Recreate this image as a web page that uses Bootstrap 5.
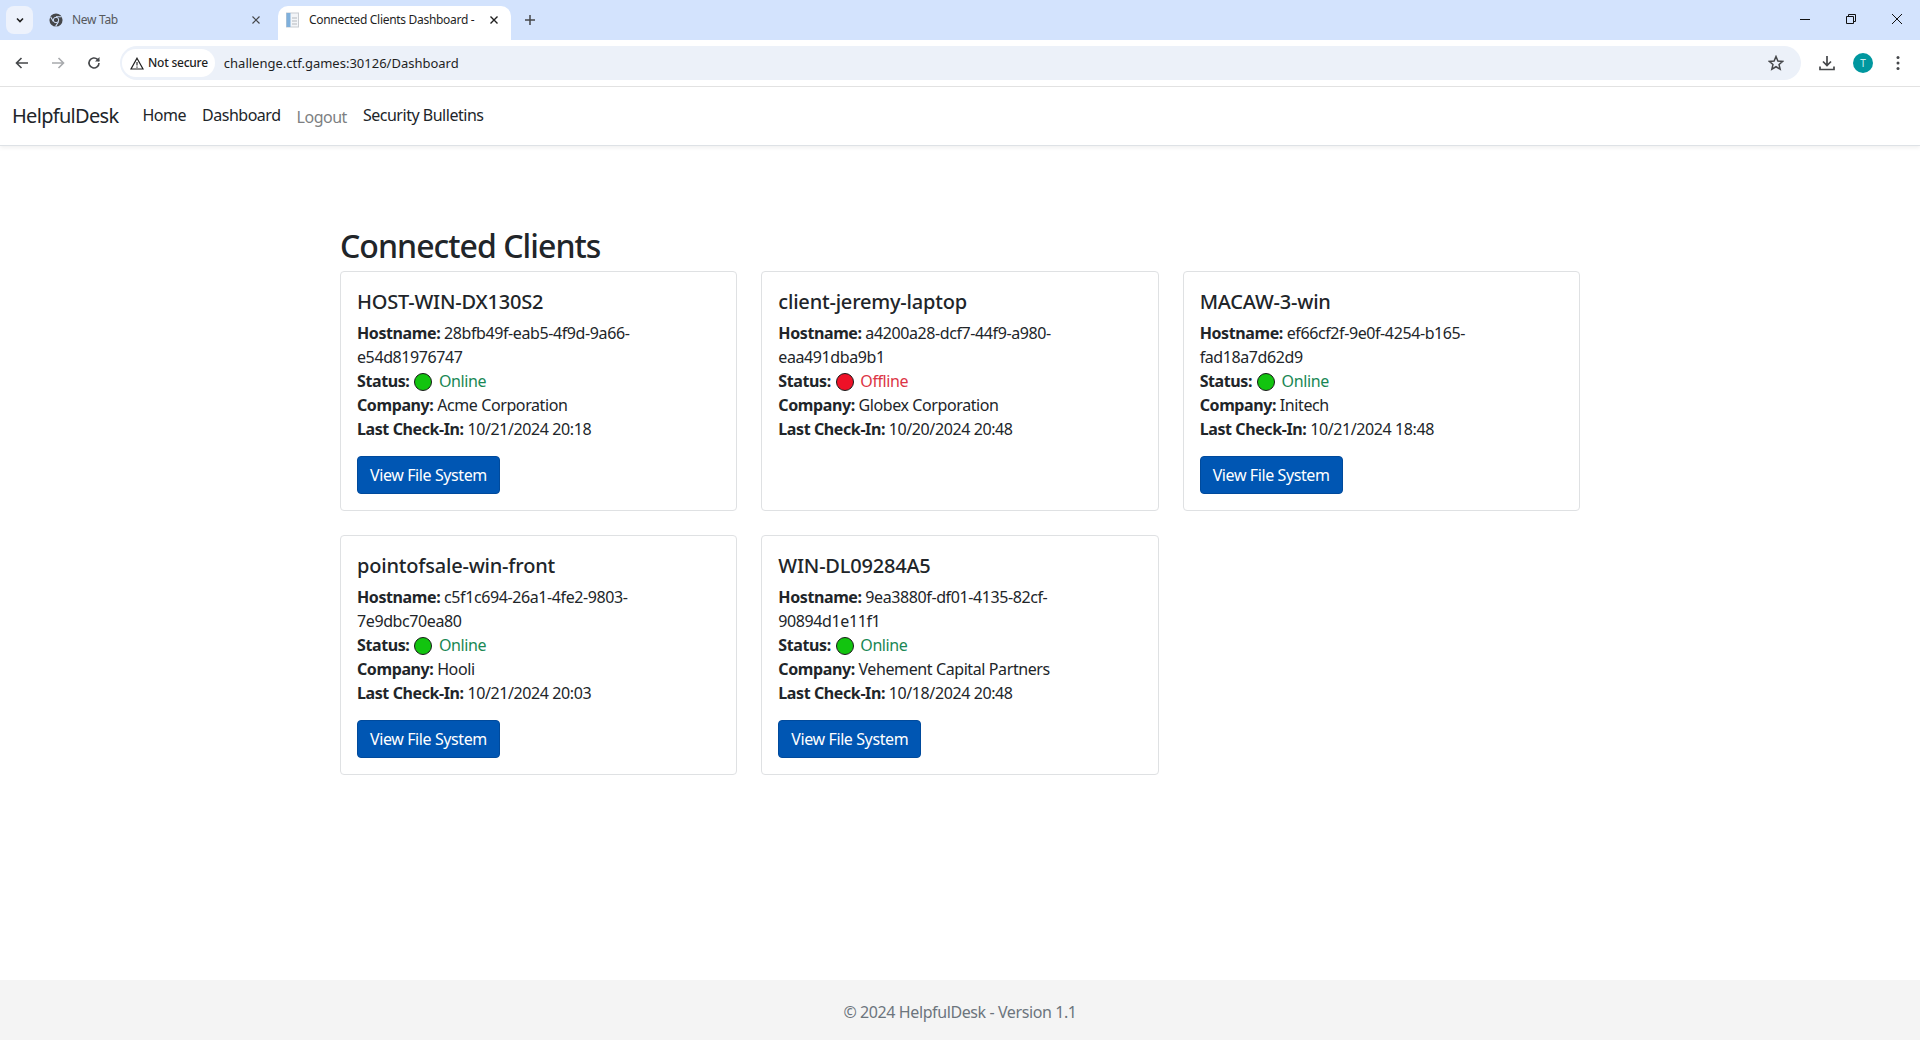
<!DOCTYPE html>
<html lang="en">
<head>
<meta charset="utf-8">
<title>Connected Clients Dashboard</title>
<link href="https://cdn.jsdelivr.net/npm/bootstrap@5.3.0/dist/css/bootstrap.min.css" rel="stylesheet">
<style>
html,body{height:100%;overflow:hidden}
body{font-family:"Noto Sans","Open Sans",sans-serif;color:#212529;letter-spacing:-.025em}
.strip{height:40px;background:#d3e3fd;font-size:12px;letter-spacing:-.025em;color:#45474a}
.tabmenu{width:27px;height:28px;margin:6px 0 0 6px;background:#edf2fc;border-radius:8px}
.tabx{height:34px;margin-top:6px;padding-bottom:6px}
.tab-idle{width:245px;padding-left:16px;padding-right:17px}
.tab-idle .tname{margin-left:9px;color:#55585c}
.tab-active{width:233px;background:#fff;border-radius:10px 10px 0 0;padding-left:8px;padding-right:12px;color:#1f1f1f}
.tab-active .tname{margin-left:9px;white-space:nowrap;overflow:hidden;flex:1}
.newtab{height:28px;margin-left:13px;margin-top:6px}
.winbtns{height:40px;gap:34px;padding-right:17px;padding-bottom:2px}
.toolbar{height:46px;background:#fff;border-radius:10px 10px 0 0;padding:6px 0 6px 14px}
.toolrule{height:1px;background:#e3e3e3}
.omni{height:34px;background:#ecf1f9;border-radius:17px;flex:1;margin:0 18px 0 18px;padding:0 17px 0 2px;font-size:13px;letter-spacing:0;color:#1f1f1f}
.omni-url{padding-top:1px}
.secure{height:28px;background:#fff;border-radius:14px;padding:0 7px 0 8px;margin-right:9px;font-size:12px;font-weight:500;letter-spacing:-.02em}
.toolright{gap:18px;padding-right:15px}
.avatar{width:20px;height:20px;border-radius:50%;background:#00979f;color:#cdeef0;font-size:10px;letter-spacing:0}
.tnav{gap:20px}
.hd-nav{background:#fff;border-bottom:1px solid #dee2e6;box-shadow:0 2px 4px rgba(0,0,0,.06);padding:8px 0 8px 12px}
.hd-nav .navbar-brand{font-size:20px;margin-right:16px;color:#212529;padding:5px 0;line-height:30px;letter-spacing:-.035em}
.hd-nav .nav-link{color:#212529;padding:8px;letter-spacing:-.03em}
.hd-nav .nav-link.muted-link{color:#7d7f82;margin-top:2px}
.clients{width:1264px;max-width:none;padding:81px 12px 0}
.clients h2{font-size:32px;font-weight:500;margin-bottom:6px;line-height:38.4px;letter-spacing:-.03em}
.client-card{border-color:#dfe1e3;border-radius:4px}
.client-card .card-title{font-size:20px;font-weight:500;line-height:24px;letter-spacing:-.01em;padding-top:2px;margin-bottom:6px}
.client-card p{margin-bottom:15px;padding-top:1px}
.dot{display:inline-block;width:18px;height:18px;border-radius:50%;border:1px solid #1a1a1a;vertical-align:-4px;margin:0 3px 0 1px}
.dot-on{background:#12c40f}
.dot-off{background:#ee1127}
.btn-view{background:#0056b3;border-color:#004a9c;color:#fff;border-radius:4px}
.btn-view:hover{background:#004a9c;color:#fff}
.site-foot{height:60px;background:#f4f4f4;color:#6c757d;padding-top:20px}
</style>
</head>
<body class="d-flex flex-column">

<div class="strip d-flex align-items-start flex-shrink-0">
  <div class="tabmenu d-flex align-items-center justify-content-center">
    <svg width="10" height="10" viewBox="0 0 10 10"><path d="M2 3.500 5 6.500 8 3.500" fill="none" stroke="#1f1f1f" stroke-width="1.600"/></svg>
  </div>
  <div class="tabx tab-idle d-flex align-items-center">
    <svg width="14" height="14" viewBox="0 0 16 16"><circle cx="8" cy="8" r="7.500" fill="#45474a"/><path d="M8 4.200h6.600M5 9.800 1.800 4.400M10.900 9.800 7.600 15.300" stroke="#d3e3fd" stroke-width="1.200" fill="none"/><circle cx="8" cy="8" r="3.100" fill="#45474a" stroke="#d3e3fd" stroke-width="1.100"/></svg>
    <span class="tname flex-grow-1">New Tab</span>
    <svg width="10" height="10" viewBox="0 0 10 10"><path d="M1.500 1.500 8.500 8.500M8.500 1.500 1.500 8.500" stroke="#45474a" stroke-width="1.200"/></svg>
  </div>
  <div class="tabx tab-active d-flex align-items-center">
    <svg width="14" height="16" viewBox="0 0 14 16"><rect x=".5" y="1" width="12" height="14" fill="#f3f5f8" stroke="#c8ccd1"/><rect x=".5" y="1" width="4" height="14" fill="#7fb0dc"/><path d="M6 6h5M6 9h5M6 12h5" stroke="#b5b9be"/></svg>
    <span class="tname">Connected Clients Dashboard -</span>
    <svg class="ms-2" width="10" height="10" viewBox="0 0 10 10"><path d="M1.500 1.500 8.500 8.500M8.500 1.500 1.500 8.500" stroke="#1f1f1f" stroke-width="1.400"/></svg>
  </div>
  <div class="newtab d-flex align-items-center">
    <svg width="12" height="12" viewBox="0 0 12 12"><path d="M6 1v10M1 6h10" stroke="#45474a" stroke-width="1.500"/></svg>
  </div>
  <div class="ms-auto d-flex align-items-center winbtns">
    <svg width="12" height="12" viewBox="0 0 12 12"><path d="M1 6.500h10" stroke="#111" stroke-width="1"/></svg>
    <svg width="12" height="12" viewBox="0 0 12 12"><path d="M1.500 3.500h7v7h-7zM3.500 3.500v-2h7v7h-2" fill="none" stroke="#111" stroke-width="1"/></svg>
    <svg width="12" height="12" viewBox="0 0 12 12"><path d="M1 1 11 11M11 1 1 11" stroke="#111" stroke-width="1"/></svg>
  </div>
</div>
<div class="toolbar d-flex align-items-center flex-shrink-0">
  <div class="d-flex align-items-center tnav">
    <svg width="16" height="16" viewBox="0 0 16 16"><path d="M14 8H3M7.500 3 2.500 8l5 5" fill="none" stroke="#45474a" stroke-width="1.600"/></svg>
    <svg width="16" height="16" viewBox="0 0 16 16"><path d="M2 8h11M8.500 3l5 5-5 5" fill="none" stroke="#a8aaad" stroke-width="1.600"/></svg>
    <svg width="16" height="16" viewBox="0 0 16 16"><path d="M13 8a5 5 0 1 1-1.500-3.600L13 6" fill="none" stroke="#45474a" stroke-width="1.600"/><path d="M13.500 2v4.500H9z" fill="#45474a"/></svg>
  </div>
  <div class="omni d-flex align-items-center">
    <div class="secure d-flex align-items-center gap-1">
      <svg width="14" height="13" viewBox="0 0 14 13"><path d="M7 1.200 13 12H1z" fill="none" stroke="#1f1f1f" stroke-width="1.200"/><path d="M7 5v3.500M7 9.500v1.200" stroke="#1f1f1f" stroke-width="1.100"/></svg>
      <span>Not secure</span>
    </div>
    <span class="omni-url">challenge.ctf.games:30126/Dashboard</span>
    <svg class="ms-auto" width="16" height="16" viewBox="0 0 16 16"><path d="M8 1.500 9.900 6l4.800.4-3.650 3.150 1.100 4.700L8 11.750l-4.150 2.500 1.100-4.700L1.300 6.400 6.100 6z" fill="none" stroke="#45474a" stroke-width="1.500"/></svg>
  </div>
  <div class="d-flex align-items-center toolright">
    <svg width="16" height="16" viewBox="0 0 16 16"><path d="M8 1v9M4 6.500 8 10.500l4-4M1 11.500V14.500h14v-3" fill="none" stroke="#45474a" stroke-width="1.700"/></svg>
    <div class="avatar d-flex align-items-center justify-content-center">T</div>
    <svg width="14" height="16" viewBox="0 0 14 16"><circle cx="7" cy="2.500" r="1.500" fill="#45474a"/><circle cx="7" cy="8" r="1.500" fill="#45474a"/><circle cx="7" cy="13.500" r="1.500" fill="#45474a"/></svg>
  </div>
</div>
<div class="toolrule flex-shrink-0"></div>

<nav class="navbar navbar-expand hd-nav flex-shrink-0">
  <div class="d-flex align-items-center">
    <a class="navbar-brand" href="#">HelpfulDesk</a>
    <ul class="navbar-nav">
      <li class="nav-item"><a class="nav-link" href="#">Home</a></li>
      <li class="nav-item"><a class="nav-link" href="#">Dashboard</a></li>
      <li class="nav-item"><a class="nav-link muted-link" href="#">Logout</a></li>
      <li class="nav-item"><a class="nav-link" href="#">Security Bulletins</a></li>
    </ul>
  </div>
</nav>

<main class="flex-grow-1">
  <div class="container clients">
    <h2>Connected Clients</h2>
    <div class="row row-cols-3 g-4">
      <div class="col"><div class="card client-card h-100"><div class="card-body">
        <h5 class="card-title">HOST-WIN-DX130S2</h5>
        <p class="card-text"><strong>Hostname:</strong> 28bfb49f-eab5-4f9d-9a66-<br>e54d81976747<br>
        <strong>Status:</strong> <span class="dot dot-on"></span> <span class="text-success">Online</span><br>
        <strong>Company:</strong> Acme Corporation<br>
        <strong>Last Check-In:</strong> 10/21/2024 20:18</p>
        <a href="#" class="btn btn-view">View File System</a>
      </div></div></div>
      <div class="col"><div class="card client-card h-100"><div class="card-body">
        <h5 class="card-title">client-jeremy-laptop</h5>
        <p class="card-text"><strong>Hostname:</strong> a4200a28-dcf7-44f9-a980-<br>eaa491dba9b1<br>
        <strong>Status:</strong> <span class="dot dot-off"></span> <span class="text-danger">Offline</span><br>
        <strong>Company:</strong> Globex Corporation<br>
        <strong>Last Check-In:</strong> 10/20/2024 20:48</p>
      </div></div></div>
      <div class="col"><div class="card client-card h-100"><div class="card-body">
        <h5 class="card-title">MACAW-3-win</h5>
        <p class="card-text"><strong>Hostname:</strong> ef66cf2f-9e0f-4254-b165-<br>fad18a7d62d9<br>
        <strong>Status:</strong> <span class="dot dot-on"></span> <span class="text-success">Online</span><br>
        <strong>Company:</strong> Initech<br>
        <strong>Last Check-In:</strong> 10/21/2024 18:48</p>
        <a href="#" class="btn btn-view">View File System</a>
      </div></div></div>
      <div class="col"><div class="card client-card h-100"><div class="card-body">
        <h5 class="card-title">pointofsale-win-front</h5>
        <p class="card-text"><strong>Hostname:</strong> c5f1c694-26a1-4fe2-9803-<br>7e9dbc70ea80<br>
        <strong>Status:</strong> <span class="dot dot-on"></span> <span class="text-success">Online</span><br>
        <strong>Company:</strong> Hooli<br>
        <strong>Last Check-In:</strong> 10/21/2024 20:03</p>
        <a href="#" class="btn btn-view">View File System</a>
      </div></div></div>
      <div class="col"><div class="card client-card h-100"><div class="card-body">
        <h5 class="card-title">WIN-DL09284A5</h5>
        <p class="card-text"><strong>Hostname:</strong> 9ea3880f-df01-4135-82cf-<br>90894d1e11f1<br>
        <strong>Status:</strong> <span class="dot dot-on"></span> <span class="text-success">Online</span><br>
        <strong>Company:</strong> Vehement Capital Partners<br>
        <strong>Last Check-In:</strong> 10/18/2024 20:48</p>
        <a href="#" class="btn btn-view">View File System</a>
      </div></div></div>
    </div>
  </div>
</main>

<footer class="site-foot text-center flex-shrink-0">© 2024 HelpfulDesk - Version 1.1</footer>
</body>
</html>
